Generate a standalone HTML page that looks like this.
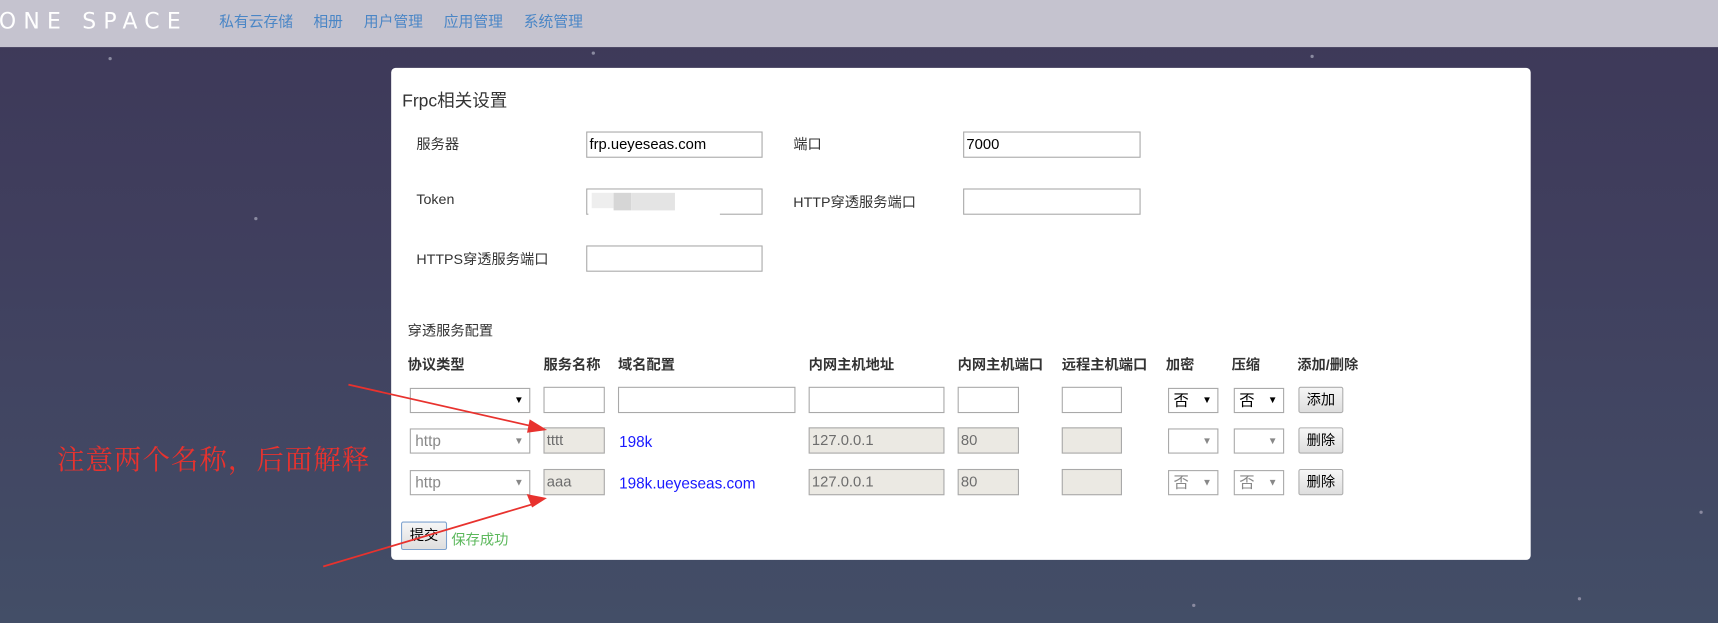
<!DOCTYPE html>
<html><head><meta charset="utf-8"><style>
*{margin:0;padding:0;box-sizing:border-box}
html,body{width:1718px;height:623px;overflow:hidden;background:#3f3d5c}
#w{position:absolute;left:0;top:0;width:1568px;height:569px;transform:scale(1.0957);transform-origin:0 0;
background:linear-gradient(#3d3858 0%,#403f5e 40%,#434e67 100%);font-family:"Liberation Sans","Microsoft YaHei","Noto Sans CJK SC",sans-serif;font-size:13px;color:#333}
.a{position:absolute;white-space:nowrap}
#nav{position:absolute;left:0;top:0;width:1568px;height:43px;background:#c5c3cf}
.lk{color:#4a86c6;font-size:13.5px;top:8px}
#panel{position:absolute;left:357px;top:62px;width:1040px;height:449px;background:#fff;border-radius:4px}
.in{position:absolute;border:1px solid #a9a9a9;background:#fff;font-size:13.5px;padding-left:2px;line-height:22px;height:24px;color:#000}
.dis{background:#ebe9e3;color:#6d6d6d;height:24px}
.sel{position:absolute;border:1px solid #a9a9a9;background:#fff;height:23px;font-size:14px;line-height:21px;padding-left:4px;color:#000}
.sel:after{content:"▼";position:absolute;right:5px;top:0;font-size:9px;color:#000}
.sd{color:#888}.sd:after{color:#888}
.btn{position:absolute;border:1px solid #adadad;background:linear-gradient(#f6f6f6,#dedede);height:24px;font-size:13px;line-height:22px;text-align:center;color:#000;border-radius:2px}
.h{font-weight:bold;font-size:13px;top:322px;color:#333}
.dot{position:absolute;width:3px;height:3px;border-radius:50%;background:#8a8aa0}
</style></head><body><div id="w">
<div id="nav">
<div class="a" style="left:-1px;top:7px;color:#fff;font-size:20px;letter-spacing:6.6px;font-family:'DejaVu Sans',sans-serif">ONE SPACE</div>
<div class="a lk" style="left:200px">私有云存储</div>
<div class="a lk" style="left:286px">相册</div>
<div class="a lk" style="left:332px">用户管理</div>
<div class="a lk" style="left:405px">应用管理</div>
<div class="a lk" style="left:478px">系统管理</div>
</div>
<div class="dot" style="left:99px;top:52px"></div><div class="dot" style="left:540px;top:47px"></div>
<div class="dot" style="left:1196px;top:50px"></div><div class="dot" style="left:232px;top:198px"></div>
<div class="dot" style="left:1551px;top:466px"></div><div class="dot" style="left:1440px;top:545px"></div>
<div class="dot" style="left:1088px;top:551px"></div>
<div id="panel"></div>
<div class="a" style="left:367px;top:78px;font-size:16px;color:#333">Frpc相关设置</div>
<div class="a" style="left:380px;top:121px">服务器</div>
<div class="in" style="left:535px;top:120px;width:161px">frp.ueyeseas.com</div>
<div class="a" style="left:724px;top:121px">端口</div>
<div class="in" style="left:879px;top:120px;width:162px">7000</div>
<div class="a" style="left:380px;top:174px">Token</div>
<div class="in" style="left:535px;top:172px;width:161px"></div>
<div class="a" style="left:537px;top:173px;width:120px;height:26px;background:#fff"></div>
<div class="a" style="left:540px;top:176px;width:20px;height:14px;background:#eee"></div>
<div class="a" style="left:560px;top:176px;width:16px;height:16px;background:#d6d6d6"></div>
<div class="a" style="left:576px;top:176px;width:40px;height:16px;background:#e4e4e4"></div>
<div class="a" style="left:724px;top:174px">HTTP穿透服务端口</div>
<div class="in" style="left:879px;top:172px;width:162px"></div>
<div class="a" style="left:380px;top:226px">HTTPS穿透服务端口</div>
<div class="in" style="left:535px;top:224px;width:161px"></div>
<div class="a" style="left:372px;top:291px">穿透服务配置</div>
<div class="a h" style="left:372px">协议类型</div><div class="a h" style="left:496px">服务名称</div>
<div class="a h" style="left:564px">域名配置</div><div class="a h" style="left:738px">内网主机地址</div>
<div class="a h" style="left:874px">内网主机端口</div><div class="a h" style="left:969px">远程主机端口</div>
<div class="a h" style="left:1064px">加密</div><div class="a h" style="left:1124px">压缩</div>
<div class="a h" style="left:1184px">添加/删除</div>
<!-- row1 -->
<div class="sel" style="left:374px;top:354px;width:110px"></div>
<div class="in" style="left:496px;top:353px;width:56px"></div>
<div class="in" style="left:564px;top:353px;width:162px"></div>
<div class="in" style="left:738px;top:353px;width:124px"></div>
<div class="in" style="left:874px;top:353px;width:56px"></div>
<div class="in" style="left:969px;top:353px;width:55px"></div>
<div class="sel" style="left:1066px;top:354px;width:46px">否</div>
<div class="sel" style="left:1126px;top:354px;width:46px">否</div>
<div class="btn" style="left:1185px;top:353px;width:41px">添加</div>
<!-- row2 -->
<div class="sel sd" style="left:374px;top:391px;width:110px">http</div>
<div class="in dis" style="left:496px;top:390px;width:56px">tttt</div>
<div class="a" style="left:565px;top:395px;color:#1a1aff;font-size:14px">198k</div>
<div class="in dis" style="left:738px;top:390px;width:124px">127.0.0.1</div>
<div class="in dis" style="left:874px;top:390px;width:56px">80</div>
<div class="in dis" style="left:969px;top:390px;width:55px"></div>
<div class="sel sd" style="left:1066px;top:391px;width:46px"></div>
<div class="sel sd" style="left:1126px;top:391px;width:46px"></div>
<div class="btn" style="left:1185px;top:390px;width:41px">删除</div>
<!-- row3 -->
<div class="sel sd" style="left:374px;top:429px;width:110px">http</div>
<div class="in dis" style="left:496px;top:428px;width:56px">aaa</div>
<div class="a" style="left:565px;top:433px;color:#1a1aff;font-size:14px">198k.ueyeseas.com</div>
<div class="in dis" style="left:738px;top:428px;width:124px">127.0.0.1</div>
<div class="in dis" style="left:874px;top:428px;width:56px">80</div>
<div class="in dis" style="left:969px;top:428px;width:55px"></div>
<div class="sel sd" style="left:1066px;top:429px;width:46px">否</div>
<div class="sel sd" style="left:1126px;top:429px;width:46px">否</div>
<div class="btn" style="left:1185px;top:428px;width:41px">删除</div>
<div class="btn" style="left:366px;top:476px;width:42px;height:26px;border-color:#7da2ce;line-height:24px">提交</div>
<div class="a" style="left:412px;top:482px;color:#5cb85c">保存成功</div>
<div class="a" style="left:52px;top:400px;color:#e8322e;font-size:25px;letter-spacing:1px;font-family:'Noto Serif CJK SC',serif">注意两个名称，后面解释</div>
<svg class="a" style="left:0;top:0" width="1568" height="569">
<g stroke="#e8322e" stroke-width="1.6" fill="#e8322e">
<line x1="318" y1="351" x2="490" y2="390"/><polygon points="497,392 484,384 482,394" />
<line x1="295" y1="517" x2="490" y2="459"/><polygon points="497,455 482,452 486,462"/>
</g></svg>
</div></body></html>
